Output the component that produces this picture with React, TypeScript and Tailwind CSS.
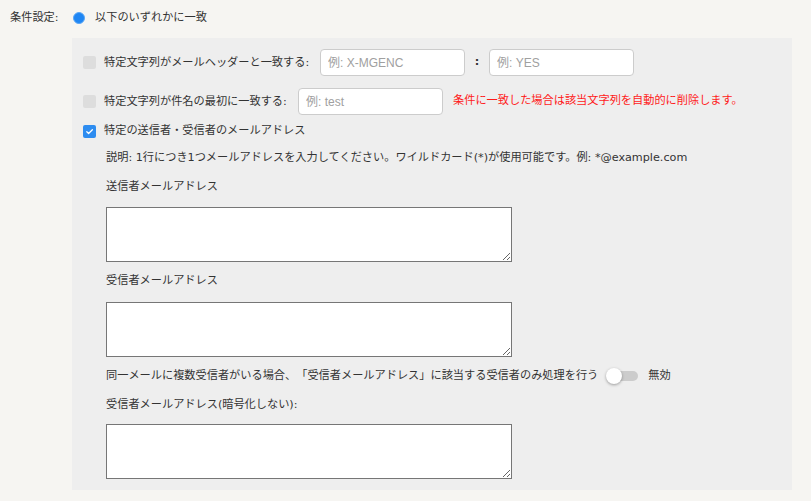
import { useState } from 'react';

const jp = { fontFamily: '"DejaVu Sans", "Noto Sans CJK JP", sans-serif' };

function Check({ checked }: { checked?: boolean }) {
  return checked ? (
    <span className="flex h-[13px] w-[13px] shrink-0 items-center justify-center rounded-[2px] bg-[#2d8cf0]">
      <svg width="9" height="9" viewBox="0 0 10 10" fill="none">
        <path d="M2 5.2l2 2L8.2 3" stroke="#fff" strokeWidth="1.4" strokeLinecap="round" strokeLinejoin="round" />
      </svg>
    </span>
  ) : (
    <span className="block h-[13px] w-[13px] shrink-0 rounded-[2px] bg-[#dddddd]" />
  );
}

function TextInput({ placeholder, w }: { placeholder: string; w: string }) {
  return (
    <input
      placeholder={placeholder}
      className={`${w} h-[27px] shrink-0 rounded-[4px] border border-[#cccccc] bg-white px-[7px] text-[12px] text-[#333] placeholder:text-[#a0a0a0] outline-none`}
      style={{ fontFamily: '"Liberation Sans", "Noto Sans CJK JP", sans-serif' }}
    />
  );
}

function Area() {
  return <textarea className="block h-[55px] w-[406px] border border-[#767676] bg-white outline-none" />;
}

export default function App() {
  const [on] = useState(false);
  return (
    <div
      className="min-h-[501px] w-full bg-[#f6f5f2] text-[11.2px] whitespace-nowrap text-[#333] [text-spacing-trim:space-all]"
      style={jp}
    >
      <div className="flex h-[36px] items-center pl-[10px]">
        <span className="w-[63px]">条件設定:</span>
        <span className="h-[12px] w-[12px] rounded-full border border-[#5aa7f7] bg-[#1f86f3]" />
        <span className="ml-[10px]">以下のいずれかに一致</span>
      </div>

      <div className="mt-[2px] ml-[72px] w-[720px] bg-[#eeeeee] pt-[11px] pb-[11px] pl-[11px]">
        <div className="flex h-[27px] items-center">
          <Check />
          <span className="ml-[8px] w-[216px] leading-[18px]">特定文字列がメールヘッダーと一致する:</span>
          <TextInput placeholder="例: X-MGENC" w="w-[145px]" />
          <span className="w-[24px] text-center font-bold">:</span>
          <TextInput placeholder="例: YES" w="w-[145px]" />
        </div>

        <div className="mt-[12px] flex h-[27px] items-center">
          <Check />
          <span className="ml-[8px] w-[194px] leading-[18px]">特定文字列が件名の最初に一致する:</span>
          <TextInput placeholder="例: test" w="w-[145px]" />
          <span className="ml-[10px] text-[#ff1a1a]">条件に一致した場合は該当文字列を自動的に削除します。</span>
        </div>

        <div className="mt-[7px] flex h-[18px] items-center">
          <Check checked />
          <span className="ml-[8px]">特定の送信者・受信者のメールアドレス</span>
        </div>

        <div className="pl-[23px]">
          <p className="mt-[9px] leading-[18px]">説明: 1行につき1つメールアドレスを入力してください。ワイルドカード(*)が使用可能です。例: *@example.com</p>

          <p className="mt-[11px] leading-[18px]">送信者メールアドレス</p>
          <div className="mt-[11px]"><Area /></div>

          <p className="mt-[10px] leading-[18px]">受信者メールアドレス</p>
          <div className="mt-[12px]"><Area /></div>

          <div className="mt-[10px] flex h-[18px] items-center">
            <span>同一メールに複数受信者がいる場合、「受信者メールアドレス」に該当する受信者のみ処理を行う</span>
            <span className="relative ml-[8px] flex h-[16px] w-[32px] items-center">
              <span className={`ml-[6px] h-[10px] w-[26px] rounded-full ${on ? 'bg-[#2d8cf0]' : 'bg-[#cccccc]'}`} />
              <span className="absolute left-0 top-0 h-[16px] w-[16px] rounded-full bg-white shadow-[0_1px_3px_rgba(0,0,0,0.35)]" />
            </span>
            <span className="ml-[10px]">無効</span>
          </div>

          <p className="mt-[11px] leading-[18px]">受信者メールアドレス(暗号化しない):</p>
          <div className="mt-[10px]"><Area /></div>
        </div>
      </div>
    </div>
  );
}
